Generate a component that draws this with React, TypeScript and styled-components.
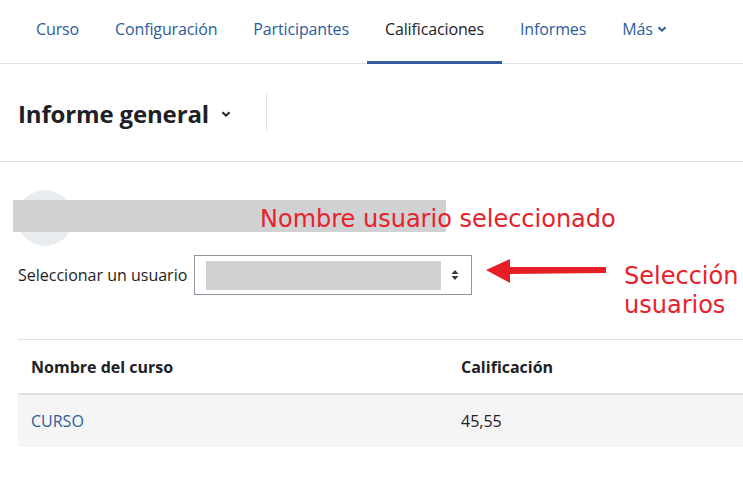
import React from "react";
import styled, { createGlobalStyle } from "styled-components";

const Global = createGlobalStyle`
  html, body { margin: 0; padding: 0; background: #fff; }
  body { font-family: "Open Sans", "Noto Sans", sans-serif; color: #1d2125; overflow: hidden; }
  * { box-sizing: border-box; }
`;

const Page = styled.div`
  width: 743px;
  height: 478px;
  position: relative;
  overflow: hidden;
`;

const Nav = styled.nav`
  display: flex;
  height: 64px;
  border-bottom: 1px solid #dee2e6;
  padding-left: 18px;
`;

const NavItem = styled.a<{ $active?: boolean }>`
  display: flex;
  align-items: center;
  gap: 4px;
  height: 64px;
  padding: 0 18px 4px;
  font-size: 16px;
  letter-spacing: -0.13px;
  color: ${(p) => (p.$active ? "#1d2125" : "#2c5c9c")};
  border-bottom: 3px solid ${(p) => (p.$active ? "#345c9c" : "transparent")};
  text-decoration: none;
  white-space: nowrap;
`;

const Header = styled.header`
  display: flex;
  align-items: center;
  height: 98px;
  border-bottom: 1px solid #dee2e6;
  padding-left: 18px;
`;

const Title = styled.h1`
  margin: 0;
  font-size: 24px;
  font-weight: 700;
  letter-spacing: -0.15px;
  display: flex;
  align-items: center;
  gap: 12px;
  padding-top: 2px;
`;

const Divider = styled.div`
  width: 1px;
  height: 38px;
  background: #dee2e6;
  margin-left: 35px;
  margin-top: -2px;
`;

const Content = styled.section`
  padding: 28px 0 0 18px;
  position: relative;
`;

const UserRow = styled.div`
  display: flex;
  align-items: center;
  height: 56px;
  position: relative;
`;

const Avatar = styled.div`
  width: 56px;
  height: 56px;
  border-radius: 50%;
  background: #e9ecef;
  margin-left: -1px;
`;

const Redact = styled.div<{ $w: number; $h: number }>`
  background: #d0d1d3;
  width: ${(p) => p.$w}px;
  height: ${(p) => p.$h}px;
`;

const NameRedact = styled(Redact)`
  position: absolute;
  left: -5px;
  top: 10px;
`;

const SelectRow = styled.div`
  display: flex;
  align-items: center;
  gap: 7px;
  margin-top: 9px;
`;

const Label = styled.label`
  font-size: 16px;
`;

const SelectBox = styled.div`
  width: 278px;
  height: 40px;
  border: 1px solid #8f959e;
  display: flex;
  align-items: center;
  justify-content: space-between;
  padding: 0 12px 0 11px;
`;

const Table = styled.div`
  margin-top: 44px;
  border-top: 1px solid #dee2e6;
  width: 760px;
`;

const Row = styled.div<{ $head?: boolean }>`
  display: grid;
  grid-template-columns: 430px 1fr;
  align-items: center;
  height: ${(p) => (p.$head ? 55 : 52)}px;
  background: ${(p) => (p.$head ? "#fff" : "#f5f5f5")};
  border-bottom: ${(p) => (p.$head ? "2px solid #dee2e6" : "none")};
  font-size: 16px;
  font-weight: ${(p) => (p.$head ? 700 : 400)};
`;

const Cell = styled.div`
  padding-left: 13px;
`;

const CourseLink = styled.a`
  color: #2c5c9c;
  text-decoration: none;
`;

const Note = styled.div`
  position: absolute;
  font-family: "DejaVu Sans", sans-serif;
  color: #e8212b;
  font-size: 24px;
  line-height: 29px;
`;

const ArrowSvg = styled.svg`
  position: absolute;
  left: 484px;
  top: 257px;
`;

const Chevron = ({ size = 10 }: { size?: number }) => (
  <svg width={size} height={size} viewBox="0 0 10 10">
    <path d="M1.5 3.2 L5 6.6 L8.5 3.2" fill="none" stroke="currentColor" strokeWidth="2" />
  </svg>
);

export default function App() {
  return (
    <Page>
      <Global />
      <Nav>
        <NavItem>Curso</NavItem>
        <NavItem>Configuración</NavItem>
        <NavItem>Participantes</NavItem>
        <NavItem $active>Calificaciones</NavItem>
        <NavItem>Informes</NavItem>
        <NavItem>
          Más <Chevron />
        </NavItem>
      </Nav>
      <Header>
        <Title>
          Informe general <Chevron size={10} />
        </Title>
        <Divider />
      </Header>
      <Content>
        <UserRow>
          <Avatar />
          <NameRedact $w={433} $h={32} />
        </UserRow>
        <SelectRow>
          <Label>Seleccionar un usuario</Label>
          <SelectBox>
            <Redact $w={235} $h={29} />
            <svg width="8" height="12" viewBox="0 0 8 12">
              <path d="M4 1 L7.5 5 H0.5 Z M4 11 L7.5 7 H0.5 Z" fill="#343a40" />
            </svg>
          </SelectBox>
        </SelectRow>
        <Table>
          <Row $head>
            <Cell>Nombre del curso</Cell>
            <Cell>Calificación</Cell>
          </Row>
          <Row>
            <Cell>
              <CourseLink>CURSO</CourseLink>
            </Cell>
            <Cell>45,55</Cell>
          </Row>
        </Table>
      </Content>
      <Note style={{ left: 260, top: 205 }}>Nombre usuario seleccionado</Note>
      <Note style={{ left: 624, top: 262 }}>
        Selección
        <br />
        usuarios
      </Note>
      <ArrowSvg width="125" height="28" viewBox="0 0 125 28">
        <path d="M2 13 L26 2 L26 10 L122 10 L122 16 L26 17 L26 26 Z" fill="#e51f25" />
      </ArrowSvg>
    </Page>
  );
}
